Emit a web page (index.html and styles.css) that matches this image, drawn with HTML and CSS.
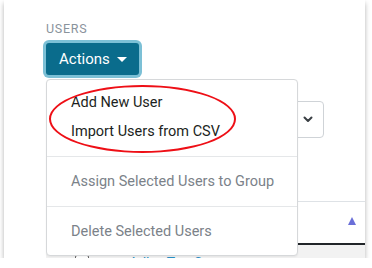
FILE: index.html
```html
<!DOCTYPE html>
<html lang="en">
<head>
    <meta charset="UTF-8">
    <meta name="viewport" content="width=device-width, initial-scale=1.0">
    <title>Users</title>
    <link rel="stylesheet" href="styles.css">
</head>
<body>
    <div class="panel">
        <div class="section-label">USERS</div>
        <div class="actions">
            <div class="actions-button">Actions <span class="caret"></span></div>
        </div>

        <div class="filter-row">
            <div class="select-box">
                <svg class="chevron" viewBox="0 0 10 7" fill="none" stroke="currentColor" stroke-width="2" stroke-linecap="round" stroke-linejoin="round">
                    <polyline points="1.5,1.5 5,5 8.5,1.5"></polyline>
                </svg>
            </div>
        </div>

        <div class="user-table">
            <div class="table-head">
                <span class="sort-up"></span>
            </div>
            <div class="table-row">
                <span class="row-check"></span>
                <span class="row-link">Adler, TestGroup</span>
            </div>
        </div>

        <div class="dropdown-menu">
            <div class="dropdown-item">Add New User</div>
            <div class="dropdown-item">Import Users from CSV</div>
            <div class="dropdown-divider"></div>
            <div class="dropdown-item disabled">Assign Selected Users to Group</div>
            <div class="dropdown-divider"></div>
            <div class="dropdown-item disabled">Delete Selected Users</div>
        </div>

        <div class="highlight-ring"></div>
    </div>
</body>
</html>
```

FILE: styles.css
```css
* {
    margin: 0;
    padding: 0;
    box-sizing: border-box;
    font-family: Roboto, 'Liberation Sans', Arial, sans-serif;
}

body {
    background: #FFFFFF;
    color: #212529;
}

.panel {
    position: relative;
    width: 361px;
    height: 258px;
    margin-left: 4px;
    padding: 21px 0 0 42px;
    background: #FFFFFF;
    overflow: hidden;
    box-shadow: 0 3px 5px rgba(0,0,0,0.3);
}

.section-label {
    font-size: 12.5px;
    line-height: 16px;
    letter-spacing: 0.7px;
    color: #8a939c;
}

.actions {
    margin-top: 6px;
}

.actions-button {
    display: inline-flex;
    align-items: center;
    gap: 7px;
    height: 32px;
    padding: 0 12px 0 13px;
    background: #0a6c8c;
    color: #FFFFFF;
    font-size: 15px;
    border-radius: 3px;
    box-shadow: 0 0 0 3px #7cc0d6;
}

.caret {
    width: 0;
    height: 0;
    border-left: 5px solid transparent;
    border-right: 5px solid transparent;
    border-top: 5px solid #FFFFFF;
}

.filter-row {
    margin-top: 26px;
}

.select-box {
    width: 278px;
    height: 37px;
    border: 1px solid #cfd3d7;
    border-radius: 4px;
    display: flex;
    align-items: center;
    justify-content: flex-end;
    padding-right: 10px;
}

.chevron {
    width: 10px;
    height: 7px;
    color: #3a3f44;
}

.user-table {
    margin-top: 63px;
    width: 320px;
}

.table-head {
    height: 44px;
    border-top: 1px solid #dee2e6;
    border-bottom: 2px solid #212529;
    display: flex;
    align-items: center;
    justify-content: flex-end;
    padding-right: 10px;
}

.sort-up {
    width: 0;
    height: 0;
    border-left: 4.5px solid transparent;
    border-right: 4.5px solid transparent;
    border-bottom: 8px solid #6a6fd8;
    margin-bottom: 4px;
}

.table-row {
    height: 30px;
    background: #f2f2f2;
    display: flex;
    align-items: flex-start;
    padding: 10px 0 0 29px;
    gap: 40px;
}

.row-check {
    width: 14px;
    height: 14px;
    border: 1px solid #666666;
    border-radius: 2px;
    background: #FFFFFF;
}

.row-link {
    font-size: 14px;
    color: #2a8fc5;
}

.dropdown-menu {
    position: absolute;
    top: 79px;
    left: 42px;
    width: 252px;
    height: 177px;
    padding: 8px 0;
    background: #FFFFFF;
    border: 1px solid #d6d8da;
    border-radius: 4px;
    box-shadow: 0 1px 2px rgba(0,0,0,0.06);
}

.dropdown-item {
    padding: 4px 24px;
    font-size: 14.5px;
    line-height: 21px;
    color: #1c1f22;
    white-space: nowrap;
}

.dropdown-item.disabled {
    color: #7b8289;
}

.dropdown-divider {
    height: 0;
    margin: 10px 0;
    border-top: 1px solid #e5e7e9;
}

.highlight-ring {
    position: absolute;
    top: 85px;
    left: 45px;
    width: 187px;
    height: 68px;
    border: 2px solid #ee0f16;
    border-radius: 50%;
}
```
